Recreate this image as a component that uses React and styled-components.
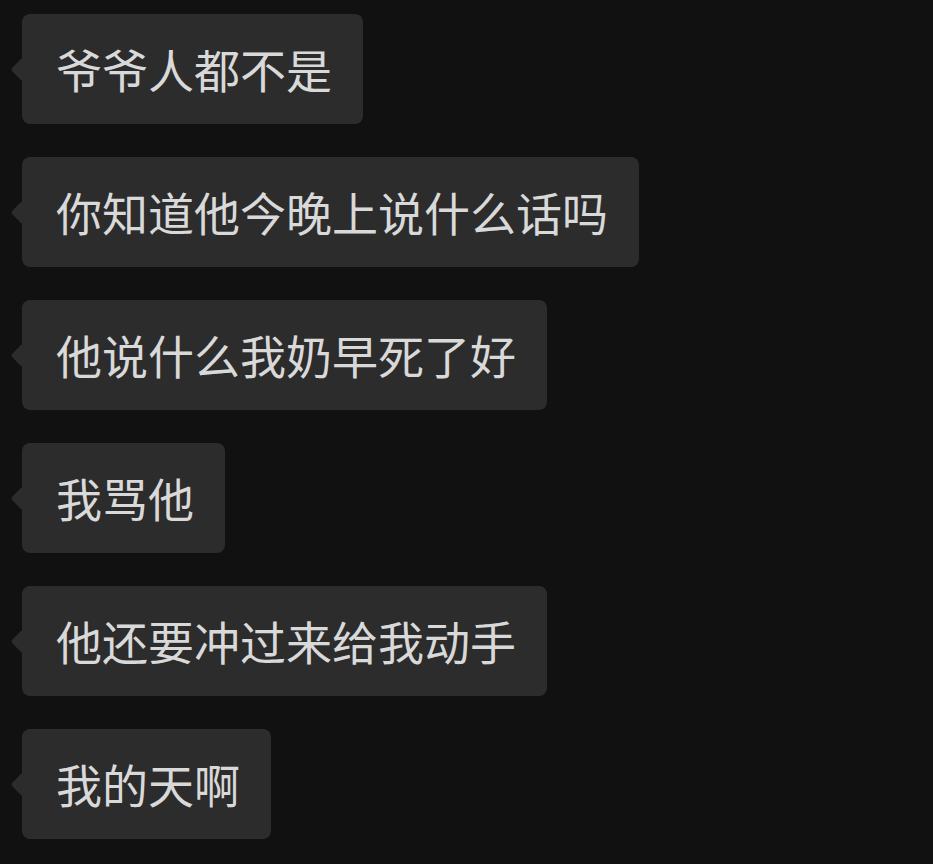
import React from "react";
import styled, { createGlobalStyle } from "styled-components";

const GlobalStyle = createGlobalStyle`
  html, body {
    margin: 0;
    padding: 0;
    background: #111111;
  }
  body {
    font-family: "Noto Sans CJK SC", "Noto Sans", sans-serif;
  }
`;

const Chat = styled.div`
  display: flex;
  flex-direction: column;
  align-items: flex-start;
  gap: 33px;
  padding: 14px 0 0 22px;
  min-height: 864px;
  box-sizing: border-box;
  background: #111111;
`;

const Bubble = styled.div`
  position: relative;
  box-sizing: border-box;
  height: 110px;
  display: flex;
  align-items: center;
  padding: 0 31px 0 34px;
  background: #2c2c2c;
  border-radius: 8px;
  color: #d9d9d9;
  font-size: 46px;
  line-height: 1;
  white-space: nowrap;

  &::before {
    content: "";
    position: absolute;
    left: -8px;
    top: 50%;
    width: 17px;
    height: 17px;
    margin-top: -8.5px;
    background: #2c2c2c;
    border-radius: 3px;
    transform: rotate(45deg);
  }
`;

const Text = styled.span`
  position: relative;
  top: -1px;
`;

const messages = [
  "爷爷人都不是",
  "你知道他今晚上说什么话吗",
  "他说什么我奶早死了好",
  "我骂他",
  "他还要冲过来给我动手",
  "我的天啊",
];

export default function App() {
  return (
    <>
      <GlobalStyle />
      <Chat>
        {messages.map((m, i) => (
          <Bubble key={i}>
            <Text>{m}</Text>
          </Bubble>
        ))}
      </Chat>
    </>
  );
}
